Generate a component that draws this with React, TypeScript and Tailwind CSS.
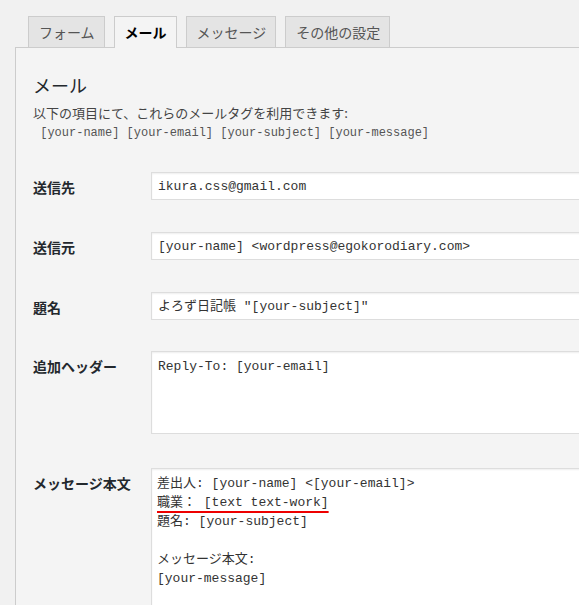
import React from 'react';

const jp = { fontFamily: '"Noto Sans CJK JP", "Noto Sans", sans-serif' };
const mono = { fontFamily: '"Liberation Mono", "Noto Sans CJK JP", monospace' };

const tabs = [
  { label: 'フォーム', active: false },
  { label: 'メール', active: true },
  { label: 'メッセージ', active: false },
  { label: 'その他の設定', active: false },
];

function Field({ label, value, mt }: { label: string; value: string; mt: string }) {
  return (
    <div className={`flex ${mt}`}>
      <div className="w-[118px] shrink-0 pt-[5px] text-[14px] leading-[20px] font-bold text-[#23282d]">{label}</div>
      <div
        className="w-[500px] h-[28px] bg-white border border-[#ddd] shadow-[inset_0_1px_2px_rgba(0,0,0,0.07)] pl-[6px] pt-[1px] text-[13px] leading-[26px] text-[#333] whitespace-pre"
        style={mono}
      >
        {value}
      </div>
    </div>
  );
}

export default function App() {
  return (
    <div className="w-[579px] h-[605px] overflow-hidden bg-[#f1f1f1]" style={jp}>
      {/* tabs */}
      <div className="flex gap-[9px] pl-[28px] pt-[16px]">
        {tabs.map(t => (
          <div
            key={t.label}
            className={
              t.active
                ? 'relative z-10 h-[32px] -mb-px border border-b-0 border-[#ccc] bg-[#f4f4f4] pl-[10px] pr-[9px] text-[14px] leading-[30px] font-bold text-black'
                : 'h-[31px] border border-b-0 border-[#ccc] bg-[#e4e4e4] pl-[10px] pr-[9px] text-[14px] leading-[30px] text-[#555]'
            }
          >
            {t.label}
          </div>
        ))}
      </div>

      {/* panel */}
      <div className="ml-[15px] w-[700px] h-[600px] border-l border-t border-[#ccc] bg-[#f4f4f4] pl-[17px]">
        <h2 className="mt-[25px] text-[18px] leading-[24px] font-normal text-[#23282d]">メール</h2>
        <p className="mt-[7px] text-[13px] leading-[18px] text-[#444]">以下の項目にて、これらのメールタグを利用できます:</p>
        <p className="mt-[2px] text-[12px] leading-[18px] text-[#555] whitespace-pre" style={mono}>
          {' [your-name] [your-email] [your-subject] [your-message]'}
        </p>

        <Field label="送信先" value="ikura.css@gmail.com" mt="mt-[30px]" />
        <Field label="送信元" value="[your-name] <wordpress@egokorodiary.com>" mt="mt-[32px]" />
        <Field label="題名" value={'よろず日記帳 "[your-subject]"'} mt="mt-[32px]" />

        <div className="flex mt-[31px]">
          <div className="w-[118px] shrink-0 pt-[5px] text-[14px] leading-[20px] font-bold text-[#23282d]">追加ヘッダー</div>
          <div
            className="w-[500px] h-[83px] bg-white border border-[#ddd] shadow-[inset_0_1px_2px_rgba(0,0,0,0.07)] pl-[6px] pt-[5px] text-[13px] leading-[19px] text-[#333] whitespace-pre"
            style={mono}
          >
            Reply-To: [your-email]
          </div>
        </div>

        <div className="flex mt-[34px]">
          <div className="w-[118px] shrink-0 pt-[5px] text-[14px] leading-[20px] font-bold text-[#23282d]">メッセージ本文</div>
          <div
            className="w-[500px] h-[200px] bg-white border border-[#ddd] shadow-[inset_0_1px_2px_rgba(0,0,0,0.07)] pl-[5px] pt-[5px] text-[13px] leading-[19px] text-[#333] whitespace-pre"
            style={mono}
          >
            <div>{'差出人: [your-name] <[your-email]>'}</div>
            <div>
              <span className="underline decoration-[#e00] decoration-2 underline-offset-[5px] [text-decoration-skip-ink:none]">
                {'職業： [text text-work]'}
              </span>
            </div>
            <div>{'題名: [your-subject]'}</div>
            <div>&nbsp;</div>
            <div>{'メッセージ本文:'}</div>
            <div>{'[your-message]'}</div>
          </div>
        </div>
      </div>
    </div>
  );
}
